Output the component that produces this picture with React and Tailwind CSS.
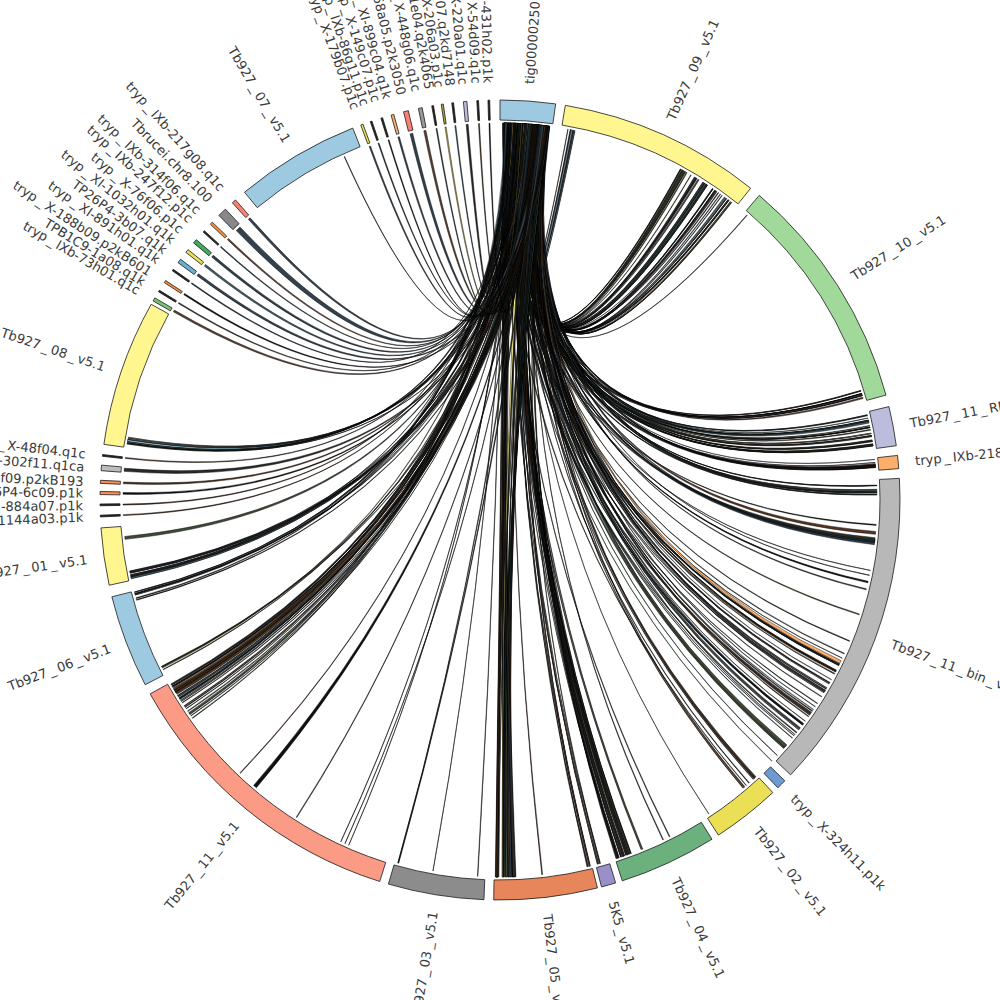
import { useMemo } from 'react';

// geometry of the circle
const CX = 500;
const CY = 500;
const R0 = 380; // inner edge of ideogram
const R1 = 400; // outer edge
const RL = 377; // where links attach
const RT = 417; // label radius

const rad = (d) => (d * Math.PI) / 180;
const pt = (r, a) => [CX + r * Math.cos(rad(a)), CY + r * Math.sin(rad(a))];
const p = ([x, y]) => `${x.toFixed(2)},${y.toFixed(2)}`;

const SEGMENTS = [
  { a0: -90, a1: -82, color: '#9ecae1', label: 'tig00000250' },
  { a0: -80.6, a1: -51.2, color: '#fff68f', label: 'Tb927_09_v5.1' },
  { a0: -49.6, a1: -15.2, color: '#a1d99b', label: 'Tb927_10_v5.1' },
  { a0: -13.5, a1: -7.8, color: '#bcbddc', label: 'Tb927_11_RNA_v5.1' },
  { a0: -6.4, a1: -4.5, color: '#fdae6b', label: 'tryp_IXb-218c06.q1k' },
  { a0: -3.1, a1: 43.4, color: '#b8b8b8', label: 'Tb927_11_bin_v5.1' },
  { a0: 44.6, a1: 46.0, color: '#6b9bd1', label: 'tryp_X-324h11.p1k' },
  { a0: 47.0, a1: 56.9, color: '#ebe055', label: 'Tb927_02_v5.1' },
  { a0: 58.0, a1: 72.2, color: '#6cb07e', label: 'Tb927_04_v5.1' },
  { a0: 73.2, a1: 75.3, color: '#9a8fc8', label: '5K5_v5.1' },
  { a0: 75.9, a1: 90.9, color: '#e6865a', label: 'Tb927_05_v5.1' },
  { a0: 92.3, a1: 106.2, color: '#8c8c8c', label: 'Tb927_03_v5.1' },
  { a0: 107.5, a1: 151.0, color: '#fb9a85', label: 'Tb927_11_v5.1' },
  { a0: 152.5, a1: 166.0, color: '#9ecae1', label: 'Tb927_06_v5.1' },
  { a0: 167.7, a1: 176.0, color: '#fff68f', label: 'Tb927_01_v5.1' },
  { a0: 188.0, a1: 209.3, color: '#fff68f', label: 'Tb927_08_v5.1' },
  { a0: 230.3, a1: 248.4, color: '#9ecae1', label: 'Tb927_07_v5.1' },
];

// tiny contigs: [centre angle, colour, width in degrees, label]
const SMALL = [
  [177.7, '#222222', 0.25, 'tryp_XI-1144a03.p1k'],
  [179.3, '#222222', 0.25, 'tryp_XI-884a07.p1k'],
  [181.0, '#fc8d59', 0.45, 'TP26P4-6c09.p1k'],
  [182.6, '#fc8d59', 0.45, 'tryp_X-51f09.p2kB193'],
  [184.6, '#bdbdbd', 0.8, 'tryp_X-302f11.q1ca'],
  [186.4, '#222222', 0.25, 'tryp_X-48f04.q1c'],
  [210.1, '#74c476', 0.5, 'tryp_IXb-73h01.q1c'],
  [211.5, '#222222', 0.25, 'TPB1C9-1a08.q1k'],
  [213.1, '#fd8d3c', 0.35, 'tryp_X-188b09.p2kB601'],
  [215.1, '#222222', 0.25, 'tryp_XI-891h01.q1k'],
  [216.7, '#6baed6', 0.6, 'TP26P4-3b07.q1k'],
  [218.5, '#e9df55', 0.5, 'tryp_XI-1032h01.q1k'],
  [220.3, '#41ab5d', 0.6, 'tryp_X-76f06.p1c'],
  [222.2, '#222222', 0.25, 'tryp_IXb-247f12.p1c'],
  [223.8, '#fd8d3c', 0.4, 'tryp_IXb-314f06.q1c'],
  [226.0, '#888888', 1.3, 'Tbrucei.chr8.100'],
  [228.3, '#fb8072', 0.6, 'tryp_IXb-217g08.q1c'],
  [249.8, '#e9df55', 0.35, 'tryp_X-179b07.p1c'],
  [251.2, '#222222', 0.25, 'tryp_IXb-86g11.p1c'],
  [252.8, '#222222', 0.25, 'tryp_X-149c07.p1c'],
  [254.4, '#fdae6b', 0.4, 'tryp_XI-899c04.q1k'],
  [256.4, '#fb8072', 0.7, 'tryp_XI-68a05.p2k3050'],
  [258.5, '#999999', 0.55, 'tryp_X-448g06.q1c'],
  [260.3, '#222222', 0.25, 'tryp_X-61e04.q2k4065'],
  [261.7, '#b5a642', 0.3, 'tryp_X-206a03.p1c'],
  [263.2, '#222222', 0.25, 'tryp_X-12d07.q2kd7148'],
  [265.0, '#bcbddc', 0.5, 'tryp_X-220a01.q1c'],
  [266.8, '#222222', 0.25, 'tryp_X-54d09.q1c'],
  [268.4, '#222222', 0.25, 'tryp_XI-431h02.p1k'],
];

// where the links from tig00000250 land: [from, to, count]
const LINK_GROUPS = [
  [-80.2, -78.2, 6],
  [-61.5, -51.6, 44],
  [-49.3, -48.9, 1],
  [-17.2, -15.6, 10],
  [-13.2, -8.1, 26],
  [-6.2, -4.7, 7],
  [-2.8, -0.4, 9],
  [0.5, 8, 7],
  [8, 16, 5],
  [16, 25, 4],
  [25, 43, 44],
  [43.5, 44, 1],
  [47.2, 50, 7],
  [56.3, 56.8, 1],
  [61, 69, 4],
  [69.6, 72.1, 22],
  [73.4, 75.1, 4],
  [76.1, 77.5, 4],
  [83.3, 83.7, 1],
  [87.4, 90.8, 34],
  [92.8, 93.5, 1],
  [99.8, 100.3, 1],
  [105.2, 106, 2],
  [112.5, 137, 6],
  [144.5, 150.8, 30],
  [152.7, 154, 4],
  [164.5, 165.9, 8],
  [167.9, 169.2, 9],
  [174, 174.4, 1],
  [188.2, 189.6, 9],
  [245.4, 245.8, 1],
];

const DARK = ['#111111', '#2a2a2a', '#3d2b1f', '#4b3a22', '#2c3e48', '#3f4a3a', '#553322', '#4a4a20', '#33404d', '#5c4033', '#1e2a30', '#3c5a66'];
const LIGHT = ['#9ecae1', '#fff68f', '#fdae6b', '#a1d99b', '#e6865a', '#c9b458', '#6b9bd1'];

function mulberry32(seed) {
  return function () {
    seed |= 0;
    seed = (seed + 0x6d2b79f5) | 0;
    let t = Math.imul(seed ^ (seed >>> 15), 1 | seed);
    t = (t + Math.imul(t ^ (t >>> 7), 61 | t)) ^ t;
    return ((t ^ (t >>> 14)) >>> 0) / 4294967296;
  };
}

function sectorPath(a0, a1) {
  const large = a1 - a0 > 180 ? 1 : 0;
  return `M${p(pt(R1, a0))} A${R1},${R1} 0 ${large} 1 ${p(pt(R1, a1))} L${p(pt(R0, a1))} A${R0},${R0} 0 ${large} 0 ${p(pt(R0, a0))} Z`;
}

function ribbonPath(s0, s1, t0, t1) {
  const a = pt(RL, s0);
  const b = pt(RL, s1);
  const c = pt(RL, t0);
  const d = pt(RL, t1);
  return `M${p(a)} L${p(b)} Q${CX},${CY} ${p(c)} L${p(d)} Q${CX},${CY} ${p(a)} Z`;
}

function buildLinks() {
  const rnd = mulberry32(927);
  const width = () => (rnd() < 0.12 ? 0.2 + rnd() * 0.35 : 0.03 + rnd() * 0.12);
  const links = [];
  const add = (t, wt) => {
    const ws = width();
    const s = -89.6 + rnd() * (7.2 - ws);
    const light = rnd() < 0.1;
    const pal = light ? LIGHT : DARK;
    links.push({ d: ribbonPath(s, s + ws, t, t + wt), fill: pal[Math.floor(rnd() * pal.length)] });
  };
  LINK_GROUPS.forEach(([lo, hi, n]) => {
    for (let i = 0; i < n; i++) {
      const wt = width();
      add(lo + rnd() * Math.max(hi - lo - wt, 0.01), wt);
    }
  });
  SMALL.forEach(([a, , w]) => add(a - w * 0.3, w * 0.6));
  return links;
}

function Spaced({ text }) {
  const parts = text.split('_');
  return parts.map((part, i) => (
    <tspan key={i}>
      {i > 0 && <tspan dx="2.5">_</tspan>}
      <tspan dx={i > 0 ? 2.5 : 0}>{part}</tspan>
    </tspan>
  ));
}

function Label({ angle, text }) {
  const [x, y] = pt(RT, angle);
  const right = Math.cos(rad(angle)) > 0;
  const rot = right ? angle : angle + 180;
  return (
    <text
      transform={`translate(${x.toFixed(2)},${y.toFixed(2)}) rotate(${rot.toFixed(2)})`}
      textAnchor={right ? 'start' : 'end'}
      dominantBaseline="central"
      fontSize="13"
      fill="#3a3a3a"
    >
      <Spaced text={text} />
    </text>
  );
}

export default function App() {
  const links = useMemo(buildLinks, []);

  return (
    <div className="w-[1000px] h-[1000px] bg-white overflow-hidden">
      <svg width="1000" height="1000" viewBox="0 0 1000 1000" className="block font-['DejaVu_Sans',sans-serif]">
        <g stroke="#000" strokeWidth="0.45" strokeLinejoin="round">
          {links.map((l, i) => (
            <path key={i} d={l.d} fill={l.fill} />
          ))}
        </g>
        <g stroke="#1a1a1a" strokeWidth="0.8">
          {SEGMENTS.map((s) => (
            <path key={s.label} d={sectorPath(s.a0, s.a1)} fill={s.color} />
          ))}
          {SMALL.map(([a, color, w, label]) => (
            <path key={label} d={sectorPath(a - w / 2, a + w / 2)} fill={color} />
          ))}
        </g>
        <g>
          {SEGMENTS.map((s) => (
            <Label key={s.label} angle={(s.a0 + s.a1) / 2} text={s.label} />
          ))}
          {SMALL.map(([a, , , label]) => (
            <Label key={label} angle={a} text={label} />
          ))}
        </g>
      </svg>
    </div>
  );
}
